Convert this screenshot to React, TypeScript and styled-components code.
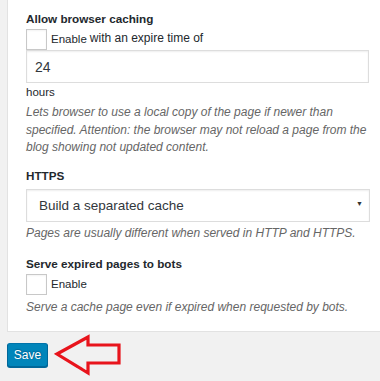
import React from "react";
import styled, { createGlobalStyle } from "styled-components";

const Global = createGlobalStyle`
  html, body { margin: 0; padding: 0; background: #f1f1f1; }
  body { font-family: "Liberation Sans", Arial, sans-serif; color: #23282d; }
`;

const Page = styled.div`
  width: 380px;
  height: 381px;
  overflow: hidden;
  background: #f1f1f1;
`;

const Panel = styled.div`
  margin-left: 7px;
  background: #fff;
  border-left: 1px solid #e2e2e2;
  border-bottom: 1px solid #e2e2e2;
  padding: 10px 10px 14px 18px;
`;

const Section = styled.div<{ $gap?: number }>`
  margin-top: ${(p) => p.$gap ?? 0}px;
`;

const Heading = styled.div`
  font-weight: bold;
  font-size: 11.7px;
  line-height: 18px;
  color: #23282d;
`;

const CheckRow = styled.label`
  display: flex;
  align-items: center;
  height: 22px;
  font-size: 11.5px;
  color: #23282d;
`;

const Box = styled.input.attrs({ type: "checkbox" })`
  appearance: none;
  margin: 0 4px 0 0;
  width: 21px;
  height: 21px;
  box-sizing: border-box;
  border: 1px solid #c8c8c8;
  background: #fff;
  box-shadow: inset 0 1px 2px rgba(0, 0, 0, 0.05);
`;

const Tail = styled.span`
  font-size: 12px;
  position: relative;
  top: -1px;
  margin-left: 3px;
`;

const TextField = styled.input`
  display: block;
  box-sizing: border-box;
  width: 343px;
  height: 33px;
  margin: 0;
  padding: 0 8px;
  border: 1px solid #ddd;
  box-shadow: inset 0 1px 2px rgba(0, 0, 0, 0.07);
  font-family: "Liberation Sans", Arial, sans-serif;
  font-size: 14px;
  color: #32373c;
  background: #fff;
  outline: none;
`;

const Unit = styled.div`
  font-size: 11.5px;
  line-height: 18px;
`;

const Description = styled.p<{ $top?: number }>`
  margin: ${(p) => p.$top ?? 0}px 0 0;
  font-style: italic;
  font-size: 12px;
  line-height: 17.5px;
  color: #666;
  width: 343px;
`;

const SelectWrap = styled.div`
  position: relative;
  margin-top: 4px;
  width: 344px;
`;

const Select = styled.select`
  display: block;
  appearance: none;
  box-sizing: border-box;
  width: 100%;
  height: 33px;
  margin: 0;
  padding: 0 12px;
  border: 1px solid #ddd;
  border-radius: 0;
  box-shadow: inset 0 1px 2px rgba(0, 0, 0, 0.07);
  background: #fff;
  font-family: "Liberation Sans", Arial, sans-serif;
  font-size: 13.5px;
  color: #32373c;
  outline: none;
`;

const Caret = styled.span`
  position: absolute;
  right: 7px;
  top: 11px;
  font-size: 7px;
  color: #333;
  pointer-events: none;
`;

const Footer = styled.div`
  display: flex;
  align-items: flex-start;
  padding: 11px 0 0 7px;
`;

const SaveButton = styled.button`
  box-sizing: border-box;
  width: 41px;
  height: 24px;
  margin: 0;
  padding: 0;
  border: 1px solid #0073aa;
  border-color: #0073aa #006799 #006799;
  border-radius: 3px;
  background: #0085ba;
  box-shadow: 0 1px 0 #006799;
  color: #fff;
  font-family: "Liberation Sans", Arial, sans-serif;
  font-size: 12px;
  text-shadow: 0 -1px 1px #006799, 1px 0 1px #006799;
`;

const Arrow = styled.svg`
  display: block;
  margin: -9px 0 0 6px;
`;

export default function App() {
  return (
    <Page>
      <Global />
      <Panel>
        <Heading>Allow browser caching</Heading>
        <CheckRow>
          <Box />
          Enable
          <Tail>with an expire time of</Tail>
        </CheckRow>
        <TextField defaultValue="24" />
        <Unit>hours</Unit>
        <Description $top={3}>
          Lets browser to use a local copy of the page if newer than specified. Attention: the
          browser may not reload a page from the blog showing not updated content.
        </Description>
        <Section $gap={10}>
          <Heading>HTTPS</Heading>
          <SelectWrap>
            <Select defaultValue="sep">
              <option value="sep">Build a separated cache</option>
            </Select>
            <Caret>▼</Caret>
          </SelectWrap>
          <Description $top={3}>
            Pages are usually different when served in HTTP and HTTPS.
          </Description>
        </Section>
        <Section $gap={13}>
          <Heading>Serve expired pages to bots</Heading>
          <CheckRow>
            <Box />
            Enable
          </CheckRow>
          <Description $top={4}>
            Serve a cache page even if expired when requested by bots.
          </Description>
        </Section>
      </Panel>
      <Footer>
        <SaveButton>Save</SaveButton>
        <Arrow width="70" height="44" viewBox="0 0 70 44">
          <polygon
            points="3,20 34,3 34,11 65,11 65,29 34,29 34,39"
            fill="none"
            stroke="#e8141c"
            strokeWidth="3.2"
            strokeLinejoin="miter"
          />
        </Arrow>
      </Footer>
    </Page>
  );
}
